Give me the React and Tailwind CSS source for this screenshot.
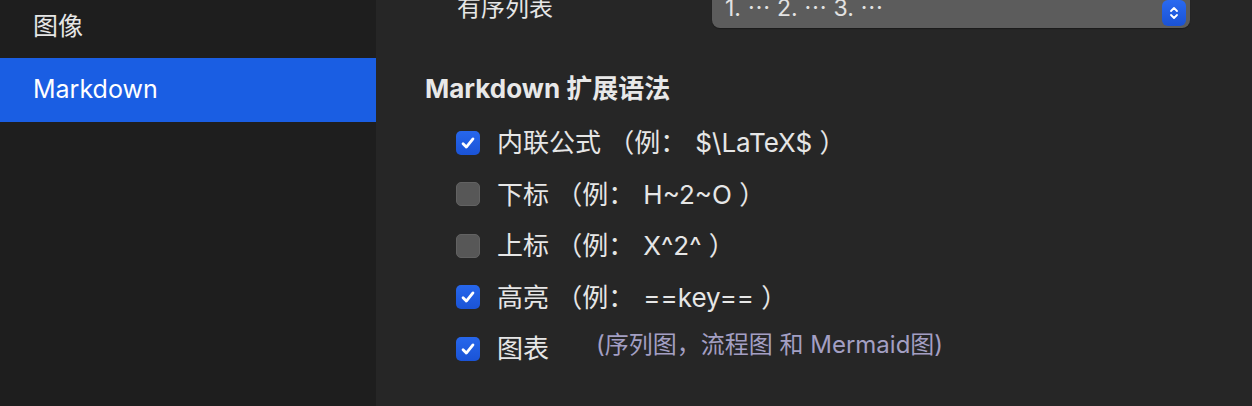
import { useState } from "react";

const font = { fontFamily: 'Inter, "Noto Sans CJK SC", sans-serif' };

const Checkbox = ({ checked, onChange }) => (
  <button
    type="button"
    onClick={onChange}
    className={`w-[24px] h-[24px] rounded-[5px] flex items-center justify-center shrink-0 ${
      checked
        ? "bg-gradient-to-b from-[#2767ec] to-[#1a53d6]"
        : "bg-[#575757] border border-[#626262]"
    }`}
  >
    {checked && (
      <svg width="18" height="18" viewBox="0 0 16 16" fill="none">
        <path
          d="M3.6 8.6 L6.5 11.6 L12.4 4.4"
          stroke="white"
          strokeWidth="2.5"
          strokeLinecap="round"
          strokeLinejoin="round"
        />
      </svg>
    )}
  </button>
);

const options = [
  { id: "math", label: "内联公式 （例：", ex: "$\\LaTeX$ ）", on: true },
  { id: "sub", label: "下标 （例：", ex: "H~2~O ）", on: false },
  { id: "sup", label: "上标 （例：", ex: "X^2^ ）", on: false },
  { id: "hl", label: "高亮 （例：", ex: "==key== ）", on: true },
  { id: "chart", label: "图表", on: true, note: "(序列图，流程图 和 Mermaid图)" },
];

const App = () => {
  const [state, setState] = useState(
    Object.fromEntries(options.map((o) => [o.id, o.on]))
  );

  return (
    <div className="flex w-[1252px] h-[406px] overflow-hidden bg-[#262626]" style={font}>
      <aside className="w-[376px] shrink-0 bg-[#1e1e1e] flex flex-col -mt-[5px]">
        <div className="h-[63px] flex items-center px-[33px] text-[25px] text-[#e6e6e6]">
          图像
        </div>
        <div className="h-[64px] flex items-center px-[33px] text-[25px] text-white bg-[#1a5ee3]">
          Markdown
        </div>
      </aside>

      <main className="flex-1 pl-[49px] -mt-[12px]">
        <div className="flex items-center h-[40px]">
          <span className="w-[287px] pl-[32px] text-[24px] text-[#e6e6e6]">有序列表</span>
          <div className="w-[478px] h-[40px] rounded-[8px] bg-[#5c5c5c] flex items-center justify-between pl-[13px] pr-[4px] shadow-[0_1px_1px_rgba(0,0,0,0.3)]">
            <span className="text-[23px] text-[#e2e2e2]">1. ⋯ 2. ⋯ 3. ⋯</span>
            <div className="w-[24px] h-[26px] mt-[10px] rounded-[6px] bg-gradient-to-b from-[#2a6af0] to-[#1a52d4] flex items-center justify-center">
              <svg width="12" height="18" viewBox="0 0 12 18" fill="none">
                <path d="M3 7 L6 4 L9 7" stroke="white" strokeWidth="1.8" strokeLinecap="round" strokeLinejoin="round" />
                <path d="M3 11 L6 14 L9 11" stroke="white" strokeWidth="1.8" strokeLinecap="round" strokeLinejoin="round" />
              </svg>
            </div>
          </div>
        </div>

        <h2 className="mt-[45px] text-[26px] font-bold text-[#e8e8e8] leading-[32px]">
          Markdown 扩展语法
        </h2>

        <div className="mt-[12px] pl-[31px] flex flex-col">
          {options.map((o) => (
            <div key={o.id} className="flex items-center h-[51.5px]">
              <Checkbox
                checked={state[o.id]}
                onChange={() => setState((s) => ({ ...s, [o.id]: !s[o.id] }))}
              />
              <span className="ml-[17px] text-[26px] text-[#e6e6e6] whitespace-pre">{o.label}</span>
              {o.ex && (
                <span className="ml-[9px] text-[26px] text-[#e6e6e6] whitespace-pre">{o.ex}</span>
              )}
              {o.note && (
                <span className="ml-[47px] -mt-[7px] text-[24px] text-[#a39fc3]">{o.note}</span>
              )}
            </div>
          ))}
        </div>
      </main>
    </div>
  );
};

export default App;
